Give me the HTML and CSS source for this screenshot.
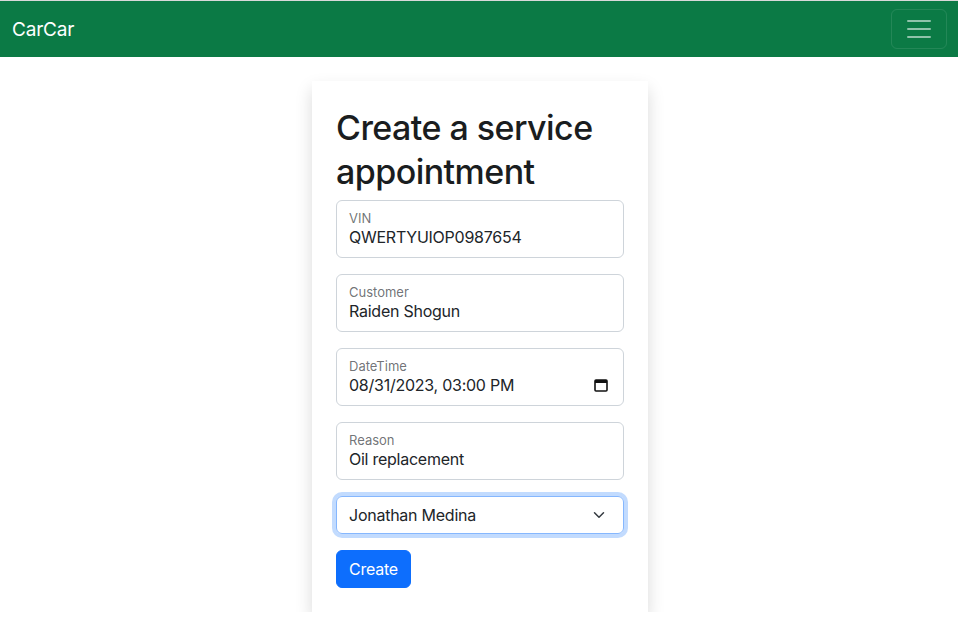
FILE: index.html
```html
<!DOCTYPE html>
<html lang="en">
<head>
<meta charset="utf-8">
<title>CarCar</title>
<link rel="stylesheet" href="styles.css">
</head>
<body>
<nav class="navbar">
  <a class="brand" href="#">CarCar</a>
  <button class="toggler" type="button" aria-label="Toggle navigation">
    <svg width="30" height="30" viewBox="0 0 30 30"><path stroke="rgba(255,255,255,0.55)" stroke-linecap="round" stroke-miterlimit="10" stroke-width="2" d="M4 7h22M4 15h22M4 23h22"/></svg>
  </button>
</nav>
<main class="page">
  <section class="card">
    <h1 class="title">Create a service appointment</h1>
    <form class="form">
      <div class="floating">
        <span class="label">VIN</span>
        <span class="value">QWERTYUIOP0987654</span>
      </div>
      <div class="floating">
        <span class="label">Customer</span>
        <span class="value">Raiden Shogun</span>
      </div>
      <div class="floating">
        <span class="label">DateTime</span>
        <span class="value row">08/31/2023, 03:00 PM
          <svg class="cal" width="14" height="14" viewBox="0 0 14 14"><rect x="1" y="2" width="12" height="11" rx="1" fill="none" stroke="#111" stroke-width="1.6"/><rect x="1" y="2" width="12" height="3" fill="#111"/></svg>
        </span>
      </div>
      <div class="floating">
        <span class="label">Reason</span>
        <span class="value">Oil replacement</span>
      </div>
      <div class="select">
        <span>Jonathan Medina</span>
        <svg width="16" height="12" viewBox="0 0 16 16"><path fill="none" stroke="#343a40" stroke-linecap="round" stroke-linejoin="round" stroke-width="2" d="m2 5 6 6 6-6"/></svg>
      </div>
      <button class="btn" type="button">Create</button>
    </form>
  </section>
</main>
</body>
</html>
```

FILE: styles.css
```css
* { box-sizing: border-box; }
body {
  margin: 0;
  font-family: Inter, "Liberation Sans", sans-serif;
  color: #212529;
  background: #fff;
  border-top: 1px solid #d9d9d9;
}
.navbar {
  height: 56px;
  background: #0b7a45;
  display: flex;
  align-items: center;
  justify-content: space-between;
  padding: 0 11px 0 12px;
}
.brand {
  color: #fff;
  text-decoration: none;
  font-size: 19px;
  letter-spacing: -0.2px;
}
.toggler {
  width: 56px;
  height: 40px;
  background: transparent;
  border: 1px solid rgba(255,255,255,0.1);
  border-radius: 6px;
  display: flex;
  align-items: center;
  justify-content: center;
  padding: 0;
}
.page {
  display: flex;
  justify-content: center;
  padding-top: 24px;
  padding-left: 2px;
}
.card {
  width: 336px;
  padding: 24px;
  background: #fff;
  box-shadow: 0 8px 16px rgba(0,0,0,0.15);
}
.title {
  margin: 0 0 8px;
  padding-top: 1px;
  font-size: 34px;
  font-weight: 500;
  line-height: 43.7px;
  letter-spacing: -0.55px;
  color: #1a1d20;
}
.form { display: flex; flex-direction: column; margin-top: -1px; }
.floating {
  height: 58px;
  border: 1px solid #ced4da;
  border-radius: 6px;
  padding: 9px 12px 0;
  margin-bottom: 16px;
  display: flex;
  flex-direction: column;
}
.label {
  font-size: 13px;
  line-height: 16px;
  color: rgba(33,37,41,0.65);
}
.value {
  font-size: 16px;
  line-height: 24px;
  margin-top: -1px;
  letter-spacing: -0.25px;
}
.row {
  display: flex;
  justify-content: space-between;
  align-items: center;
}
.cal { margin-right: 3px; }
.select {
  height: 38px;
  border: 1px solid #86b7fe;
  border-radius: 6px;
  box-shadow: 0 0 0 4px rgba(13,110,253,0.25);
  padding: 0 16px 0 12px;
  display: flex;
  align-items: center;
  justify-content: space-between;
  font-size: 16px;
  letter-spacing: -0.25px;
  margin-bottom: 16px;
}
.btn {
  align-self: flex-start;
  height: 38px;
  padding: 0 12px;
  background: #0d6efd;
  color: #fff;
  border: 1px solid #0d6efd;
  border-radius: 6px;
  font-family: inherit;
  font-size: 16px;
  letter-spacing: -0.25px;
}
```
